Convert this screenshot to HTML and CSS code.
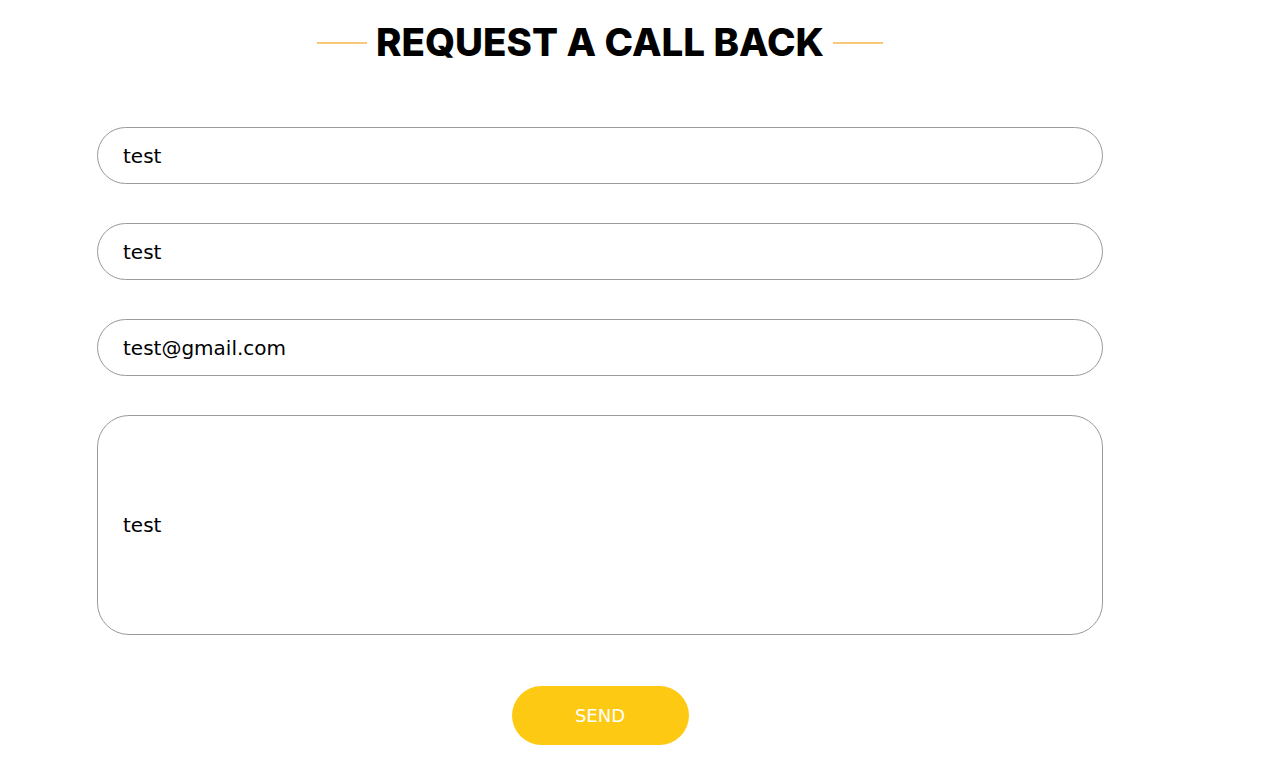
FILE: index.html
```html
<!DOCTYPE html>
<html lang="en">
<head>
<meta charset="utf-8">
<title>Request a call back</title>
<link rel="stylesheet" href="styles.css">
</head>
<body>
<div class="wrap">
  <h2 class="title"><span class="line"></span><span class="title-text">REQUEST A CALL BACK</span><span class="line"></span></h2>
  <form class="form">
    <input class="field" type="text" value="test">
    <input class="field" type="text" value="test">
    <input class="field" type="email" value="test@gmail.com">
    <div class="area"><span>test</span></div>
    <div class="actions"><button type="button" class="send">SEND</button></div>
  </form>
</div>
</body>
</html>
```
FILE: styles.css
```css
* { box-sizing: border-box; }
html, body { margin: 0; padding: 0; background: #fff; }
body { font-family: "DejaVu Sans", "Open Sans", sans-serif; color: #000; }
.wrap { width: 1200px; padding: 0 97px; }
.title {
  margin: 0;
  height: 84px;
  display: flex;
  align-items: center;
  justify-content: center;
  gap: 9px;
  font-family: Inter, "Open Sans", sans-serif;
  font-weight: 800;
  font-size: 38.5px;
  letter-spacing: 0;
}
.line { width: 50px; height: 2px; background: #f7c877; margin-top: 1px; }
.form { margin-top: 43px; display: flex; flex-direction: column; gap: 39px; }
.field {
  display: block;
  width: 100%;
  height: 57px;
  border: 1px solid #9a9a9a;
  border-radius: 29px;
  padding: 0 25px;
  font-family: "DejaVu Sans", sans-serif;
  font-size: 20px;
  color: #000;
  background: #fff;
  outline: none;
}
.area {
  height: 220px;
  border: 1px solid #9a9a9a;
  border-radius: 32px;
  padding: 0 25px;
  display: flex;
  align-items: center;
  font-size: 20px;
}
.actions { display: flex; justify-content: center; margin-top: 12px; }
.send {
  width: 177px;
  height: 59px;
  border: none;
  border-radius: 30px;
  background: #fdc913;
  color: #fff;
  font-family: "DejaVu Sans", sans-serif;
  font-size: 18px;
  cursor: pointer;
}
```
